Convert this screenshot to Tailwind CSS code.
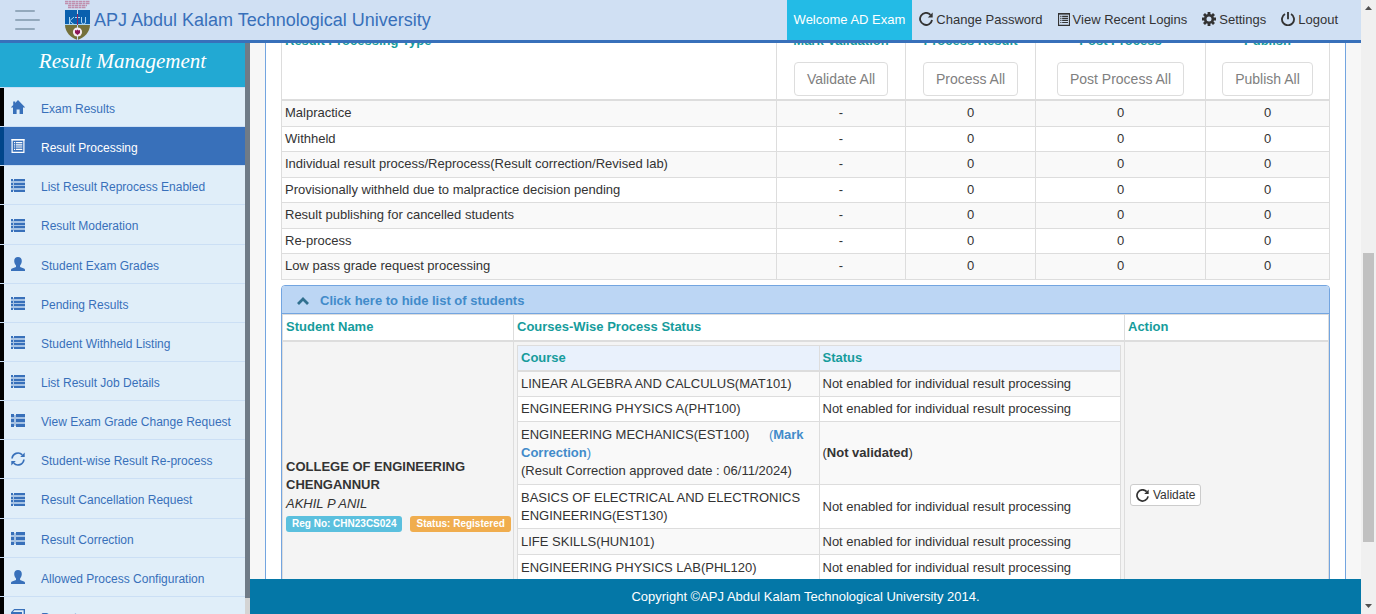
<!DOCTYPE html>
<html lang="en">
<head>
<meta charset="utf-8">
<title>Result Management</title>
<script src="https://cdn.jsdelivr.net/npm/@tailwindcss/browser@4"></script>
</head>
<body class="bg-[#f7f7f7] font-['Liberation_Sans',Arial,sans-serif] text-[13px] leading-[18px] text-[#333]">
<svg class="hidden">
  <symbol id="home" viewBox="0 0 14 14"><path fill="currentColor" d="M7 0 14.2 7.4H12V14H8.6V9.5H5.6V14H2V7.4H-.2L2.2 5V1.6H4.2V2.9Z"/></symbol>
  <symbol id="list" viewBox="0 -1 14 14"><path fill="currentColor" opacity=".35" d="M0 1H14V12H0Z"/><path fill="currentColor" d="M0 0H2V2H0ZM3 0H14V2H3ZM0 4H2V6H0ZM3 4H14V6H3ZM0 7H2V9H0ZM3 7H14V9H3ZM0 11H2V13H0ZM3 11H14V13H3Z"/></symbol>
  <symbol id="thlist" viewBox="0 -1 14 14"><path fill="currentColor" opacity=".35" d="M0 1H14V12H0Z"/><path fill="currentColor" d="M0 0H3V3H0ZM5 0H14V3H5ZM0 5H3V8H0ZM5 5H14V8H5ZM0 10H3V13H0ZM5 10H14V13H5Z"/></symbol>
  <symbol id="user" viewBox="0 0 14 14"><path fill="currentColor" d="M7 0C9.4 0 10.8 1.5 10.8 4 10.8 5.900 10 7.500 9.100 8.400V9.900L13 11.500C13.700 11.800 14 12.300 14 13V14H0V13C0 12.300.3 11.800 1 11.500L5 9.900V8.400C4 7.500 3.200 5.900 3.200 4 3.200 1.500 4.600 0 7 0Z"/></symbol>
  <symbol id="listalt" viewBox="0 0 13 14"><path fill="none" stroke="currentColor" stroke-width="1.200" d="M.6.6H12.400V13.400H.6Z"/><path fill="currentColor" d="M2.500 3H3.700V4.200H2.500ZM4.500 3H10.800V4.200H4.500ZM2.500 5.200H3.700V6.400H2.500ZM4.500 5.200H10.800V6.400H4.500ZM2.500 7.400H3.700V8.600H2.500ZM4.500 7.400H10.800V8.600H4.500ZM2.500 9.700H3.700V10.900H2.500ZM4.500 9.700H10.800V10.900H4.500ZM0 0H13V1.600H0Z"/></symbol>
  <symbol id="refresh" viewBox="0 0 14 14"><g fill="none" stroke="currentColor" stroke-width="1.700"><path d="M1.100 6.500A6 6 0 0 1 11.300 2.800M12.900 7.500A6 6 0 0 1 2.700 11.200"/></g><path fill="currentColor" d="M13.700.6V5.100H9.200ZM.3 13.400V8.900H4.800Z"/></symbol>
  <symbol id="repeat" viewBox="0 0 13 13"><path fill="none" stroke="currentColor" stroke-width="1.700" d="M10.700 2.600A5.600 5.600 0 1 0 12.100 7.400"/><path fill="currentColor" d="M12.700.5V5H8.200Z"/></symbol>
  <symbol id="book" viewBox="0 0 14 14"><path fill="currentColor" d="M3.200 0H14V10L12 14H1L0 13V3.200ZM3.300 1.300 1.900 3.100H11V11L12.600 8.500V1.300Z" fill-rule="evenodd"/></symbol>
  <symbol id="cog" viewBox="0 0 14 14"><g stroke="currentColor" stroke-width="2.800"><path d="M7 0V3M7 11V14M0 7H3M11 7H14M2 2 4.200 4.200M9.800 9.800 12 12M2 12 4.200 9.800M9.800 4.200 12 2"/></g><circle cx="7" cy="7" r="3.800" fill="none" stroke="currentColor" stroke-width="2.600"/></symbol>
  <symbol id="off" viewBox="0 0 13 13"><g fill="none" stroke="currentColor" stroke-width="1.700"><path d="M3.700 1.900A5.600 5.600 0 1 0 9.300 1.900M6.500 0V6.800"/></g></symbol>
  <symbol id="chevron" viewBox="0 0 12 8"><path fill="none" stroke="currentColor" stroke-width="2.800" d="M1 7 6 2 11 7"/></symbol>
</svg>

<div class="flex h-screen overflow-hidden">
  <div class="flex min-w-0 flex-1 flex-col">
    <header class="flex h-[43px] shrink-0 items-center border-b-[3px] border-[#3870ba] bg-[#d0e0f3] whitespace-nowrap">
      <button aria-label="Toggle menu" class="ml-[15px] flex w-[25px] shrink-0 flex-col gap-[7px]">
        <span class="h-[2px] w-5 rounded bg-[#93a9bc]"></span>
        <span class="h-[2px] w-full rounded bg-[#93a9bc]"></span>
        <span class="h-[2px] w-5 rounded bg-[#93a9bc]"></span>
      </button>
      <svg class="ml-6 h-10 w-[27px] shrink-0" viewBox="0 0 27 40">
        <path d="M1 1.500H26M1 3.500H26M4 5.500H23M4 7.500H22" stroke="#c08fae" stroke-width="1.400" stroke-dasharray="3 .5"/>
        <path d="M1 10H26V25H1Z" fill="#0a60ae"/>
        <path d="M1 25H26C26 32 20 38 13.500 40 7 38 1 32 1 25Z" fill="#75713a"/>
        <path d="M13.500 9V40" stroke="#c3dcef"/>
        <path d="M5.500 17V24M10 17 5.500 21 10 24.500M11 17.500H16M13.500 17.500V24M17.500 17V22Q17.500 24 19.500 24T21.500 22V17M1 24.500H26" fill="none" stroke="#a9d4f1" stroke-width="1"/>
        <path d="M13.500 14V25" stroke="#8d2763"/>
        <circle cx="13.500" cy="32" r="4.600" fill="#f4eaf0"/>
        <path d="M11 30 12.500 30.500 13.500 29.500 14.500 30.500 16 30V33L13.500 35 11 33Z" fill="#8d1658"/>
      </svg>
      <h1 class="ml-[3px] text-[18px] leading-6 text-[#3870ba]">APJ Abdul Kalam Technological University</h1>
      <nav class="ml-auto flex h-full items-center gap-[15px] pr-[23px] [&_svg]:mb-[2px]">
        <a href="#" class="-mr-2 flex h-full items-center bg-[#23bbe6] px-[7px] text-white">Welcome AD Exam</a>
        <a href="#" class="flex items-center gap-[3px]"><svg class="size-[14px]"><use href="#repeat"/></svg>Change Password</a>
        <a href="#" class="flex items-center gap-[3px]"><svg class="h-[13px] w-3"><use href="#listalt"/></svg>View Recent Logins</a>
        <a href="#" class="flex items-center gap-[3px]"><svg class="size-[14px]"><use href="#cog"/></svg>Settings</a>
        <a href="#" class="flex items-center gap-[3px]"><svg class="size-[14px]"><use href="#off"/></svg>Logout</a>
      </nav>
    </header>

    <div class="flex min-h-0 flex-1">
      <aside class="flex w-[250px] shrink-0 overflow-hidden bg-[#d4d4d4]">
        <div class="min-w-0 flex-1 overflow-hidden bg-[#e0eef9] text-xs text-[#3870ba]">
          <h2 class="flex h-11 items-center justify-center bg-[#22a9d3] pb-2 font-['Liberation_Serif',serif] text-[21px] leading-6 text-white italic">Result Management</h2>
          <ul class="border-t border-[#cbdff5] *:h-[39px] *:border-b *:border-[#cbdff5] [&>*:nth-child(7n+4)]:h-10 [&_a]:flex [&_a]:h-full [&_a]:items-center [&_a]:gap-4 [&_a]:border-l-4 [&_a]:border-black [&_a]:pt-[3px] [&_a]:pl-[7px] [&_svg]:mb-[3px] [&_svg]:size-[14px] [&_svg]:shrink-0">
            <li><a href="#"><svg><use href="#home"/></svg>Exam Results</a></li>
            <li><a href="#" class="border-[#00458a]! bg-[#3870ba] text-white"><svg><use href="#listalt"/></svg>Result Processing</a></li>
            <li><a href="#"><svg><use href="#list"/></svg>List Result Reprocess Enabled</a></li>
            <li><a href="#"><svg><use href="#list"/></svg>Result Moderation</a></li>
            <li><a href="#"><svg><use href="#user"/></svg>Student Exam Grades</a></li>
            <li><a href="#"><svg><use href="#list"/></svg>Pending Results</a></li>
            <li><a href="#"><svg><use href="#list"/></svg>Student Withheld Listing</a></li>
            <li><a href="#"><svg><use href="#list"/></svg>List Result Job Details</a></li>
            <li><a href="#"><svg><use href="#thlist"/></svg>View Exam Grade Change Request</a></li>
            <li><a href="#"><svg><use href="#refresh"/></svg>Student-wise Result Re-process</a></li>
            <li><a href="#"><svg><use href="#list"/></svg>Result Cancellation Request</a></li>
            <li><a href="#"><svg><use href="#thlist"/></svg>Result Correction</a></li>
            <li><a href="#"><svg><use href="#user"/></svg>Allowed Process Configuration</a></li>
            <li><a href="#"><svg><use href="#book"/></svg>Reports</a></li>
          </ul>
        </div>
        <div class="mb-4 w-[5px] shrink-0 bg-[#6f7b87]"></div>
      </aside>

      <div class="flex min-w-0 flex-1 flex-col">
        <main class="min-h-0 flex-1 overflow-hidden px-[15px]">
          <div class="-mt-4 border-x border-[#73a5e0] bg-white px-[15px] pt-[5px]">
            <table class="w-full table-fixed border-collapse [&_td]:border [&_td]:border-[#ddd] [&_td]:px-[3px] [&_td]:py-0 [&_td:not(:first-child)]:text-center [&_th]:border-x [&_th]:border-b-2 [&_th]:border-[#ddd] [&_th]:px-[3px] [&_th]:pb-[3px] [&_th]:align-top [&_th]:text-[#169c9c]">
              <colgroup><col><col class="w-[129px]"><col class="w-[130px]"><col class="w-[170px]"><col class="w-[124px]"></colgroup>
              <thead>
                <tr class="[&_button]:mt-3 [&_button]:rounded [&_button]:border [&_button]:border-[#ddd] [&_button]:bg-white [&_button]:px-3 [&_button]:py-[6px] [&_button]:text-sm [&_button]:font-normal [&_button]:text-[#808080]">
                  <th class="text-left">Result Processing Type</th>
                  <th>Mark Validation<br><button>Validate All</button></th>
                  <th>Process Result<br><button>Process All</button></th>
                  <th>Post Process<br><button>Post Process All</button></th>
                  <th>Publish<br><button>Publish All</button></th>
                </tr>
              </thead>
              <tbody class="[&>tr]:h-[25px] [&>tr:nth-child(odd)]:h-[26px] [&>tr:nth-child(odd)]:bg-[#f9f9f9]">
                <tr><td>Malpractice</td><td>-</td><td>0</td><td>0</td><td>0</td></tr>
                <tr><td>Withheld</td><td>-</td><td>0</td><td>0</td><td>0</td></tr>
                <tr><td>Individual result process/Reprocess(Result correction/Revised lab)</td><td>-</td><td>0</td><td>0</td><td>0</td></tr>
                <tr><td>Provisionally withheld due to malpractice decision pending</td><td>-</td><td>0</td><td>0</td><td>0</td></tr>
                <tr><td>Result publishing for cancelled students</td><td>-</td><td>0</td><td>0</td><td>0</td></tr>
                <tr><td>Re-process</td><td>-</td><td>0</td><td>0</td><td>0</td></tr>
                <tr><td>Low pass grade request processing</td><td>-</td><td>0</td><td>0</td><td>0</td></tr>
              </tbody>
            </table>

            <section class="mt-[5px] rounded-t border border-[#73a5e0]">
              <a href="#" class="flex h-7 items-center gap-[11px] rounded-t-[3px] border-b border-[#73a5e0] bg-[#bcd6f4] px-[15px] pt-[3px] font-bold text-[#428bca]"><svg class="h-2 w-3 text-[#31708f]"><use href="#chevron"/></svg>Click here to hide list of students</a>
              <table class="w-full table-fixed border-collapse">
                <colgroup><col class="w-[231px]"><col><col class="w-[204px]"></colgroup>
                <thead>
                  <tr class="h-[27px] text-left text-[#169c9c] *:border *:border-b-2 *:border-[#ddd] *:px-[3px]">
                    <th>Student Name</th><th>Courses-Wise Process Status</th><th>Action</th>
                  </tr>
                </thead>
                <tbody>
                  <tr class="h-[308px] bg-[#f4f4f4] *:border *:border-[#ddd]">
                    <td class="px-[3px]">
                      <div class="font-bold">COLLEGE OF ENGINEERING CHENGANNUR</div>
                      <div class="mt-px italic">AKHIL P ANIL</div>
                      <div class="mt-[3px] flex gap-2 text-[10px] leading-4 font-bold whitespace-nowrap text-white">
                        <span class="rounded-[3px] bg-[#5bc0de] px-[6px]">Reg No: CHN23CS024</span>
                        <span class="rounded-[3px] bg-[#f0ad4e] px-[6px]">Status: Registered</span>
                      </div>
                    </td>
                    <td class="p-[3px] align-top">
                      <table class="w-full table-fixed border-collapse bg-white [&_td]:border [&_td]:border-[#ddd] [&_td]:px-[3px] [&_th]:border [&_th]:border-b-2 [&_th]:border-[#ddd] [&_th]:px-[3px]">
                        <thead>
                          <tr class="h-[25px] bg-[#e9f1fc] text-left text-[#169c9c]"><th>Course</th><th>Status</th></tr>
                        </thead>
                        <tbody class="[&>tr:nth-child(odd)]:bg-[#f9f9f9]">
                          <tr class="h-[26px]"><td>LINEAR ALGEBRA AND CALCULUS(MAT101)</td><td>Not enabled for individual result processing</td></tr>
                          <tr class="h-[25px]"><td>ENGINEERING PHYSICS A(PHT100)</td><td>Not enabled for individual result processing</td></tr>
                          <tr class="h-[63px]"><td>ENGINEERING MECHANICS(EST100) <a href="#" class="ml-4 text-[#428bca]">(<b>Mark Correction</b>)</a><br>(Result Correction approved date : 06/11/2024)</td><td>(<b>Not validated</b>)</td></tr>
                          <tr class="h-11"><td>BASICS OF ELECTRICAL AND ELECTRONICS ENGINEERING(EST130)</td><td>Not enabled for individual result processing</td></tr>
                          <tr class="h-[26px]"><td>LIFE SKILLS(HUN101)</td><td>Not enabled for individual result processing</td></tr>
                          <tr class="h-[26px]"><td>ENGINEERING PHYSICS LAB(PHL120)</td><td>Not enabled for individual result processing</td></tr>
                        </tbody>
                      </table>
                    </td>
                    <td class="px-[5px]"><button class="flex items-center gap-1 rounded-[3px] border border-[#ccc] bg-white px-[5px] py-px text-xs leading-[18px]"><svg class="size-[13px]"><use href="#repeat"/></svg>Validate</button></td>
                  </tr>
                </tbody>
              </table>
            </section>
          </div>
        </main>
        <footer class="flex h-[35px] shrink-0 items-center justify-center bg-[#0477a7] text-white">Copyright ©APJ Abdul Kalam Technological University 2014.</footer>
      </div>
    </div>
  </div>

  <div class="flex w-[15px] shrink-0 flex-col items-center bg-[#f0f0f0]">
    <svg class="h-4 w-[15px] shrink-0" viewBox="0 0 15 16"><path fill="#505050" d="M4 10H11L7.500 6Z"/></svg>
    <div class="grow-[237]"></div>
    <div class="w-[11px] grow-[289] bg-[#c1c1c1]"></div>
    <div class="grow-[56]"></div>
    <svg class="h-4 w-[15px] shrink-0" viewBox="0 0 15 16"><path fill="#505050" d="M4 6H11L7.500 10Z"/></svg>
  </div>
</div>
</body>
</html>
